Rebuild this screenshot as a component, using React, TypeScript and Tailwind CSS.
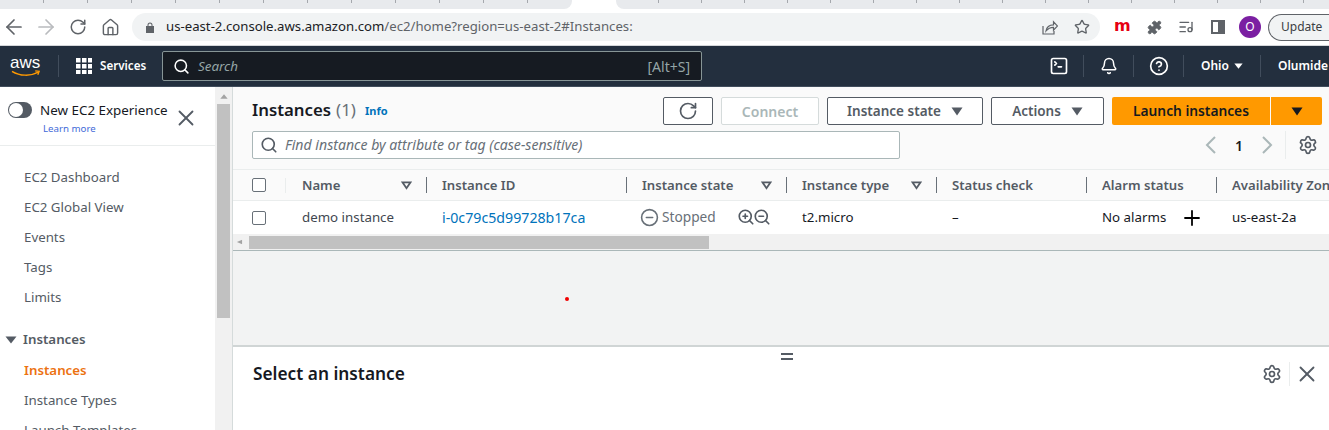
import React from 'react';
import { RotateCw, House, Star, Puzzle, ListMusic, Search, X, Settings, ZoomIn, ZoomOut, Plus, CircleMinus, CircleHelp, Bell, SquareTerminal, ArrowLeft, ArrowRight } from 'lucide-react';

const Caret = ({ className }: { className: string }) => (
  <svg viewBox="0 0 12 8" className={className} fill="currentColor" preserveAspectRatio="none"><path d="M0.5 0.5h11L6 7.5z" /></svg>
);

const FilterCaret = () => (
  <svg viewBox="0 0 12 10" className="w-[11px] h-[9px] text-[#545b64]" fill="none" stroke="currentColor" strokeWidth="2"><path d="M1.5 1.5h9L6 8z" /></svg>
);

const Chevron = ({ flip }: { flip?: boolean }) => (
  <svg viewBox="0 0 12 18" className={`w-[12px] h-[18px] text-[#aab7b8] ${flip ? 'rotate-180' : ''}`} fill="none" stroke="currentColor" strokeWidth="2"><path d="M10 1 2 9l8 8" /></svg>
);

const Divider = () => <div className="w-px h-[22px] bg-[#414d5c]" />;

const GridIcon = () => (
  <svg viewBox="0 0 16 16" className="w-[16px] h-[16px]" fill="white">
    {[0, 6, 12].map((y) => [0, 6, 12].map((x) => <rect key={`${x}-${y}`} x={x} y={y} width="4.500" height="4.500" />))}
  </svg>
);

const columns = [
  { label: 'Name', width: 'w-[140px]', filter: true },
  { label: 'Instance ID', width: 'w-[200px]', filter: false },
  { label: 'Instance state', width: 'w-[160px]', filter: true },
  { label: 'Instance type', width: 'w-[150px]', filter: true },
  { label: 'Status check', width: 'w-[150px]', filter: false },
  { label: 'Alarm status', width: 'w-[130px]', filter: false },
  { label: 'Availability Zone', width: 'w-[130px]', filter: false },
];

const sideLinks = ['EC2 Dashboard', 'EC2 Global View', 'Events', 'Tags', 'Limits'];

const ActionButton = ({ label, width }: { label: string; width: string }) => (
  <button className={`${width} h-[28px] border border-[#545b64] rounded-[2px] bg-white flex items-center justify-center gap-[10px] text-[13.5px] font-semibold text-[#545b64]`}>
    {label}
    <Caret className="w-[12px] h-[9px]" />
  </button>
);

const App = () => {
  return (
    <div className="w-[1329px] h-[430px] overflow-hidden bg-white font-['Noto_Sans',sans-serif] flex flex-col">
      {/* Chrome tab strip */}
      <div className="h-[9px] bg-white flex shrink-0">
        <div className="w-[572px] h-full flex bg-[#e8eaed] rounded-br-[8px]">
          {Array.from({ length: 12 }).map((_, i) => (
            <div key={i} className="w-[44px] h-[3px] border-r border-[#a5a8ad]" />
          ))}
        </div>
        <div className="w-[44px]" />
        <div className="flex-1 h-full flex bg-[#e8eaed] rounded-bl-[8px] overflow-hidden">
          {Array.from({ length: 17 }).map((_, i) => (
            <div key={i} className="w-[43px] h-[3px] border-r border-[#a5a8ad] shrink-0" />
          ))}
        </div>
      </div>

      {/* Chrome toolbar */}
      <div className="h-[37px] shrink-0 flex items-center bg-white border-b border-[#d5d7da] pl-[2px] text-[#5f6368]">
        <div className="flex items-center gap-[8px]">
          <div className="w-[24px] flex justify-center"><ArrowLeft className="w-[24px] h-[24px]" strokeWidth={1.7} /></div>
          <div className="w-[24px] flex justify-center"><ArrowRight className="w-[24px] h-[24px] text-[#b9bbbe]" strokeWidth={1.7} /></div>
          <div className="w-[24px] flex justify-center"><RotateCw className="w-[18px] h-[18px]" strokeWidth={2} /></div>
          <div className="w-[24px] flex justify-center"><House className="w-[19px] h-[19px]" strokeWidth={1.8} /></div>
        </div>
        <div className="ml-[10px] w-[968px] h-[28px] rounded-full bg-[#f1f3f4] flex items-center pl-[14px]">
          <svg viewBox="0 0 8 11" className="w-[8px] h-[11px]" fill="#5f6368"><path d="M1.500 4V3a2.500 2.500 0 0 1 5 0v1H8v7H0V4zm1 0h3V3a1.500 1.500 0 0 0-3 0z" /></svg>
          <span className="ml-[12px] text-[13.2px] text-[#202124] whitespace-nowrap">us-east-2.console.aws.amazon.com<span className="text-[#5f6368]">/ec2/home?region=us-east-2#Instances:</span></span>
          <svg viewBox="0 0 16 16" className="w-[16px] h-[16px] ml-auto" fill="none" stroke="currentColor" strokeWidth="1.200">
            <path d="M1 7v8h11v-3" />
            <path d="M4 12c.6-4 3.500-6.200 7.500-6.200V2.800L15.500 7l-4 4.200V8.300C8.500 8.300 6 9.500 4 12z" />
          </svg>
          <Star className="w-[16px] h-[16px] ml-[16px] mr-[10px]" strokeWidth={2} />
        </div>
        <span className="ml-[14px] w-[17px] text-[16px] leading-[20px] font-bold text-[#e60012] font-['DejaVu_Sans',sans-serif] -mt-[2px]">m</span>
        <Puzzle className="w-[15px] h-[15px] ml-[16px] fill-[#5f6368]" strokeWidth={1.5} />
        <ListMusic className="w-[16px] h-[16px] ml-[16px]" strokeWidth={2} />
        <div className="ml-[17px] w-[14px] h-[14px] border-[2px] border-[#5f6368] flex justify-end">
          <div className="w-[5px] h-full bg-[#5f6368]" />
        </div>
        <div className="ml-[14px] w-[22px] h-[22px] rounded-full bg-[#7b1fa2] text-white text-[12px] flex items-center justify-center">O</div>
        <div className="ml-[7px] flex-1 h-[27px] rounded-l-full border border-r-0 border-[#5f6368] bg-[#f1f3f4] flex items-center pl-[12px] text-[12px] text-[#3c4043]">Update</div>
      </div>

      {/* AWS nav */}
      <div className="h-[41px] shrink-0 bg-[#232f3e] flex items-center border-b border-[#414d5c] text-white">
        <div className="w-[58px] pl-[10px] flex flex-col items-start">
          <span className="text-[17px] leading-[14px] font-['Liberation_Sans',sans-serif]">aws</span>
          <svg viewBox="0 0 34 8" className="w-[32px] h-[7px] text-[#ff9900]" fill="none" stroke="currentColor" strokeWidth="1.6"><path d="M1 1.500c9 5.500 21 6 30 .8M27.500 1l4.500 .5-1.500 4" /></svg>
        </div>
        <Divider />
        <div className="ml-[17px]"><GridIcon /></div>
        <span className="ml-[8px] w-[45px] text-[11.6px] font-semibold whitespace-nowrap">Services</span>
        <div className="ml-[17px] w-[540px] h-[30px] bg-[#161b22] border border-[#879596] rounded-[2px] flex items-center pl-[10px] pr-[11px]">
          <Search className="w-[17px] h-[17px]" strokeWidth={2.2} />
          <span className="ml-[8px] text-[13.4px] italic text-[#95a5a6]">Search</span>
          <span className="ml-auto text-[14px] text-[#95a5a6]">[Alt+S]</span>
        </div>
        <div className="ml-auto flex items-center">
          <SquareTerminal className="w-[20px] h-[20px] mr-[14px]" strokeWidth={2} />
          <Divider />
          <Bell className="w-[18px] h-[18px] ml-[16px] mr-[15px]" strokeWidth={2} />
          <Divider />
          <CircleHelp className="w-[20px] h-[20px] ml-[15px] mr-[14px]" strokeWidth={2} />
          <Divider />
          <span className="ml-[17px] w-[28px] text-[12px] font-semibold">Ohio</span>
          <Caret className="w-[9px] h-[6px] ml-[5px] mr-[17px]" />
          <Divider />
          <span className="ml-[17px] w-[51px] text-[12px] font-semibold whitespace-nowrap">Olumide</span>
        </div>
      </div>

      {/* Console body */}
      <div className="flex-1 min-h-0 flex">
        {/* Side navigation */}
        <div className="w-[215px] shrink-0 flex flex-col text-[#545b64] text-[13.3px]">
          <div className="h-[59px] shrink-0 border-b border-[#eaeded] flex items-start pl-[8px] pt-[14px]">
            <div className="w-[24px] h-[16px] mt-[1px] rounded-full bg-[#545b64] relative shrink-0">
              <div className="absolute left-[1px] top-[1px] w-[14px] h-[14px] rounded-full bg-white" />
            </div>
            <div className="ml-[8px] flex flex-col w-[133px]">
              <span className="text-[13.4px] leading-[19px] text-[#16191f] whitespace-nowrap">New EC2 Experience</span>
              <span className="text-[9.7px] leading-[15px] mt-[1px] text-[#3f6ad8] ml-[3px]">Learn more</span>
            </div>
            <X className="w-[26px] h-[26px] shrink-0 mt-[4px]" strokeWidth={1.7} />
          </div>
          <div className="flex flex-col pl-[24px] pt-[21px] gap-[10px]">
            {sideLinks.map((link) => (
              <span key={link} className="h-[20px] leading-[20px]">{link}</span>
            ))}
          </div>
          <div className="flex items-center pl-[5px] mt-[23px] h-[20px] font-semibold">
            <Caret className="w-[12px] h-[8px]" />
            <span className="ml-[6px]">Instances</span>
          </div>
          <span className="ml-[24px] mt-[10px] h-[20px] leading-[20px] font-semibold text-[#ec7211]">Instances</span>
          <span className="ml-[24px] mt-[10px] h-[20px] leading-[20px]">Instance Types</span>
          <span className="ml-[24px] mt-[10px] h-[20px] leading-[20px]">Launch Templates</span>
        </div>

        {/* Side scrollbar */}
        <div className="w-[17px] shrink-0 bg-[#f1f1f1] flex flex-col items-center pt-[7px]">
          <Caret className="w-[8px] h-[5px] text-[#a3a3a3] rotate-180" />
          <div className="mt-[5px] w-[13px] h-[214px] bg-[#c1c1c1]" />
        </div>

        {/* Main content */}
        <div className="flex-1 min-w-0 flex flex-col border-l border-[#d5dbdb]">
          <div className="h-[164px] shrink-0 bg-[#fafafa] flex flex-col border-b border-[#aab7b8]">
            <div className="h-[82px] shrink-0 pl-[19px] flex flex-col">
              <div className="h-[28px] mt-[10px] flex items-center">
                <span className="text-[16.8px] font-semibold text-[#16191f] -mt-[2px]">Instances</span>
                <span className="ml-[5px] text-[17px] text-[#687078] -mt-[2px]">(1)</span>
                <span className="ml-[9px] text-[11px] font-bold text-[#0073bb]">Info</span>
                <button className="ml-auto w-[50px] h-[28px] border border-[#545b64] rounded-[2px] bg-white flex items-center justify-center">
                  <RotateCw className="w-[20px] h-[20px] text-[#545b64]" strokeWidth={2} />
                </button>
                <button className="ml-[8px] w-[98px] h-[28px] border border-[#d5dbdb] rounded-[2px] bg-white text-[14px] font-semibold text-[#aab7b8]">Connect</button>
                <div className="ml-[8px] flex gap-[8px]">
                  <ActionButton label="Instance state" width="w-[156px]" />
                  <ActionButton label="Actions" width="w-[113px]" />
                </div>
                <div className="ml-[8px] flex gap-[1px] pr-[7px]">
                  <button className="w-[158px] h-[28px] rounded-l-[2px] bg-[#ff9900] text-[13.75px] font-semibold text-[#16191f]">Launch instances</button>
                  <button className="w-[51px] h-[28px] rounded-r-[2px] bg-[#ff9900] flex items-center justify-center text-[#16191f]">
                    <Caret className="w-[12px] h-[9px]" />
                  </button>
                </div>
              </div>
              <div className="mt-[6px] h-[28px] flex items-center">
                <div className="w-[648px] h-[28px] border border-[#aab7b8] rounded-[2px] bg-white flex items-center pl-[7px]">
                  <Search className="w-[18px] h-[18px] text-[#545b64]" strokeWidth={2.2} />
                  <span className="ml-[7px] text-[14.1px] italic text-[#687078] whitespace-nowrap">Find instance by attribute or tag (case-sensitive)</span>
                </div>
                <div className="ml-auto"><Chevron /></div>
                <span className="ml-[18px] w-[9px] text-[14px] font-semibold text-[#16191f]">1</span>
                <div className="ml-[17px]"><Chevron flip /></div>
                <div className="ml-[12px] w-px h-[28px] bg-[#eaeded]" />
                <Settings className="ml-[12px] mr-[11px] w-[20px] h-[20px] text-[#545b64]" strokeWidth={2} />
              </div>
            </div>

            {/* Instances table */}
            <div className="h-[32px] shrink-0 flex items-center border-y border-[#eaeded] text-[13.15px] font-semibold text-[#545b64] overflow-hidden">
              <div className="w-[54px] shrink-0 pl-[19px] flex items-center">
                <div className="w-[14px] h-[14px] border border-[#687078] rounded-[2px] bg-white" />
                <div className="ml-[19px] w-px h-[15px] bg-[#eaeded]" />
              </div>
              {columns.map((col, i) => (
                <div key={col.label} className={`${col.width} shrink-0 flex items-center pl-[15px] pr-[14px] h-[16px] ${i < 6 ? 'border-r border-[#687078]' : ''}`}>
                  <span className="whitespace-nowrap mt-[2px]">{col.label}</span>
                  {col.filter && <span className="ml-auto flex"><FilterCaret /></span>}
                </div>
              ))}
            </div>
            <div className="h-[33px] shrink-0 bg-white flex items-center text-[13.3px] text-[#16191f] overflow-hidden">
              <div className="w-[54px] shrink-0 pl-[19px]">
                <div className="w-[14px] h-[14px] border border-[#687078] rounded-[2px] bg-white" />
              </div>
              <span className="w-[140px] shrink-0 pl-[15px] text-[#414750]">demo instance</span>
              <span className="w-[200px] shrink-0 pl-[15px] text-[#0073bb] text-[14.2px]">i-0c79c5d99728b17ca</span>
              <div className="w-[160px] shrink-0 pl-[13px] flex items-center text-[#687078]">
                <CircleMinus className="w-[19px] h-[19px]" strokeWidth={2} />
                <span className="ml-[3px] w-[54px] text-[13.7px]">Stopped</span>
                <ZoomIn className="ml-[21px] w-[18px] h-[18px] text-[#545b64]" strokeWidth={2.2} />
                <ZoomOut className="-ml-[2px] w-[18px] h-[18px] text-[#545b64]" strokeWidth={2.2} />
              </div>
              <span className="w-[150px] shrink-0 pl-[15px]">t2.micro</span>
              <span className="w-[150px] shrink-0 pl-[15px]">–</span>
              <div className="w-[130px] shrink-0 pl-[15px] flex items-center">
                <span className="w-[65px] whitespace-nowrap">No alarms</span>
                <Plus className="ml-[13px] w-[24px] h-[24px] text-black" strokeWidth={1.8} />
              </div>
              <span className="w-[130px] shrink-0 pl-[15px] whitespace-nowrap">us-east-2a</span>
            </div>
            <div className="flex-1 bg-[#f1f1f1] flex items-center pl-[4px]">
              <Caret className="w-[5px] h-[6px] text-[#a3a3a3] rotate-90" />
              <div className="ml-[7px] w-[460px] h-[13px] bg-[#c1c1c1]" />
            </div>
          </div>

          {/* Empty split area */}
          <div className="h-[96px] shrink-0 bg-[#f2f3f3] border-b-2 border-[#d0d5d5] flex items-start pl-[332px] pt-[46px]">
            <div className="w-[4px] h-[4px] rounded-full bg-[#f00000]" />
          </div>

          {/* Detail pane */}
          <div className="flex-1 min-h-0 bg-white flex flex-col">
            <div className="flex justify-center pl-[12px]">
              <div className="w-[12px] h-[7px] mt-[6px] border-y-2 border-[#545b64]" />
            </div>
            <div className="flex items-center pl-[20px] mt-[2px] pr-[9px] h-[24px]">
              <span className="text-[17.3px] font-semibold text-[#16191f]">Select an instance</span>
              <Settings className="ml-auto w-[20px] h-[20px] text-[#545b64]" strokeWidth={2} />
              <div className="ml-[7px] w-px h-[24px] bg-[#eaeded]" />
              <X className="ml-[4px] w-[26px] h-[26px] text-[#545b64]" strokeWidth={1.7} />
            </div>
          </div>
        </div>
      </div>
    </div>
  );
};

export default App;
